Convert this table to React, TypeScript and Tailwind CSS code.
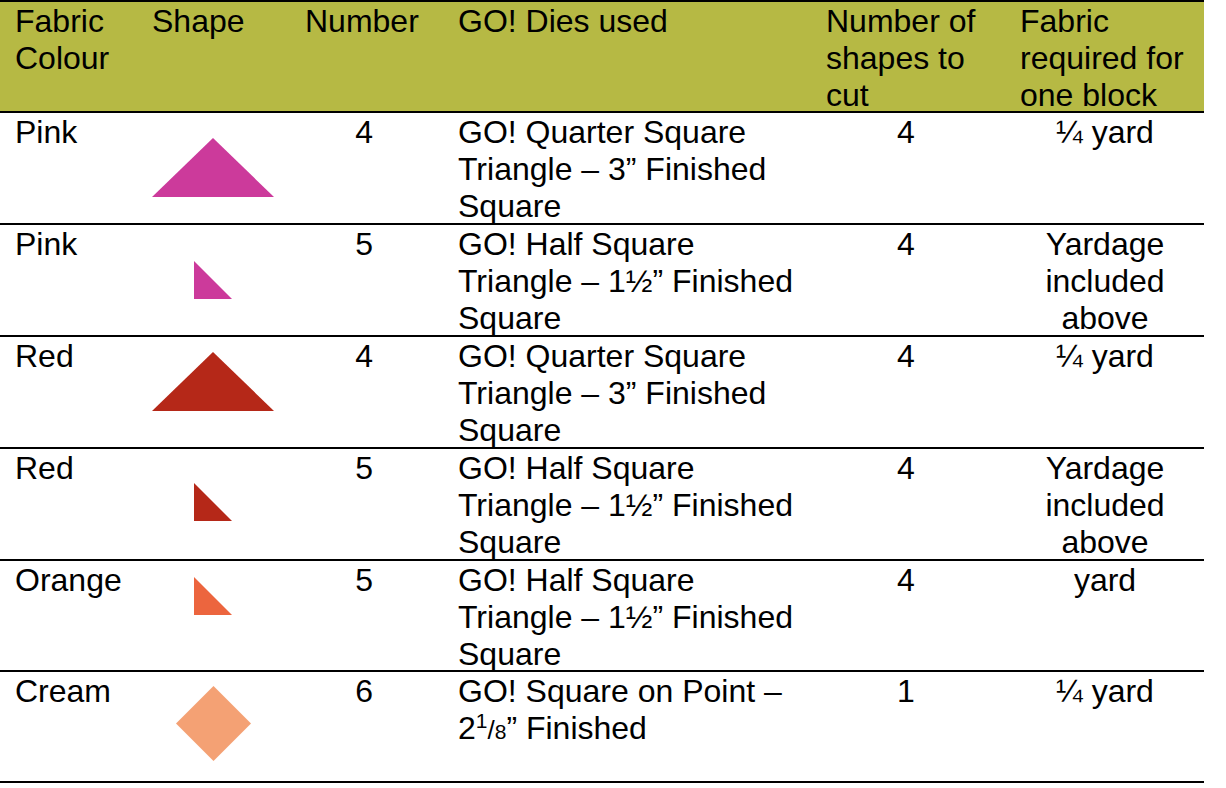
const font = { fontFamily: '"Liberation Sans", Arial, Helvetica, sans-serif' };

function BigTriangle({ color, top }: { color: string; top: string }) {
  return (
    <svg width="122" height="60" viewBox="0 0 122 60" className={`block ml-[12px] ${top}`}>
      <polygon points="0,59 61,0 122,59" fill={color} />
    </svg>
  );
}

function SmallTriangle({ color, top }: { color: string; top: string }) {
  return (
    <svg width="38" height="38" viewBox="0 0 38 38" className={`block ml-[54px] ${top}`}>
      <polygon points="0,0 0,38 38,38" fill={color} />
    </svg>
  );
}

function Diamond({ color, top }: { color: string; top: string }) {
  return (
    <svg width="75" height="75" viewBox="0 0 75 75" className={`block ml-[36px] ${top}`}>
      <polygon points="37.5,0 75,37.5 37.5,75 0,37.5" fill={color} />
    </svg>
  );
}

type Row = {
  colour: string;
  shape: React.ReactNode;
  number: string;
  dies: React.ReactNode;
  count: string;
  fabric: React.ReactNode;
  h: string;
};

const quarter = (
  <>
    GO! Quarter Square
    <br />
    Triangle – 3” Finished
    <br />
    Square
  </>
);

const half = (
  <>
    GO! Half Square
    <br />
    Triangle – 1½” Finished
    <br />
    Square
  </>
);

const included = (
  <>
    Yardage
    <br />
    included
    <br />
    above
  </>
);

const rows: Row[] = [
  {
    colour: "Pink",
    shape: <BigTriangle color="#cc3a9b" top="mt-[25px]" />,
    number: "4",
    dies: quarter,
    count: "4",
    fabric: "¼ yard",
    h: "h-[112px]",
  },
  {
    colour: "Pink",
    shape: <SmallTriangle color="#cc3a9b" top="mt-[36px]" />,
    number: "5",
    dies: half,
    count: "4",
    fabric: included,
    h: "h-[112px]",
  },
  {
    colour: "Red",
    shape: <BigTriangle color="#b52818" top="mt-[15px]" />,
    number: "4",
    dies: quarter,
    count: "4",
    fabric: "¼ yard",
    h: "h-[112px]",
  },
  {
    colour: "Red",
    shape: <SmallTriangle color="#b52818" top="mt-[34px]" />,
    number: "5",
    dies: half,
    count: "4",
    fabric: included,
    h: "h-[112px]",
  },
  {
    colour: "Orange",
    shape: <SmallTriangle color="#ec653e" top="mt-[16px]" />,
    number: "5",
    dies: half,
    count: "4",
    fabric: "yard",
    h: "h-[111px]",
  },
  {
    colour: "Cream",
    shape: <Diamond color="#f4a174" top="mt-[14px]" />,
    number: "6",
    dies: (
      <>
        GO! Square on Point –
        <br />
        2<span className="relative top-[-11px] text-[21px]">1</span>
        <span className="text-[26px]">/</span>
        <span className="text-[21px]">8</span>” Finished
      </>
    ),
    count: "1",
    fabric: "¼ yard",
    h: "h-[111px]",
  },
];

export default function App() {
  return (
    <div className="bg-white w-[1226px] h-[788px]" style={font}>
      <div className="w-[1204px] border-t-2 border-black text-[32px] leading-[37px] text-black">
        <div className="flex h-[111px] bg-[#b6b944] border-b-2 border-black">
          <div className="w-[140px] pl-[15px] pt-[1px]">
            Fabric
            <br />
            Colour
          </div>
          <div className="w-[157px] pl-[12px] pt-[1px]">Shape</div>
          <div className="w-[146px] pl-[8px] pt-[1px]">Number</div>
          <div className="w-[375px] pl-[15px] pt-[1px]">GO! Dies used</div>
          <div className="w-[194px] pl-[8px] pt-[1px]">
            Number of
            <br />
            shapes to
            <br />
            cut
          </div>
          <div className="w-[192px] pl-[8px] pt-[1px]">
            Fabric
            <br />
            required for
            <br />
            one block
          </div>
        </div>
        {rows.map((r, i) => (
          <div key={i} className={`flex border-b-2 border-black ${r.h}`}>
            <div className="w-[140px] pl-[15px] pt-[1px]">{r.colour}</div>
            <div className="w-[157px]">{r.shape}</div>
            <div className="w-[146px] pr-[70px] pt-[1px] text-right">{r.number}</div>
            <div className="w-[375px] pl-[15px] pt-[1px]">{r.dies}</div>
            <div className="w-[194px] pl-[8px] pr-[26px] pt-[1px] text-center">{r.count}</div>
            <div className="w-[192px] pl-[8px] pr-[14px] pt-[1px] text-center">{r.fabric}</div>
          </div>
        ))}
      </div>
    </div>
  );
}
